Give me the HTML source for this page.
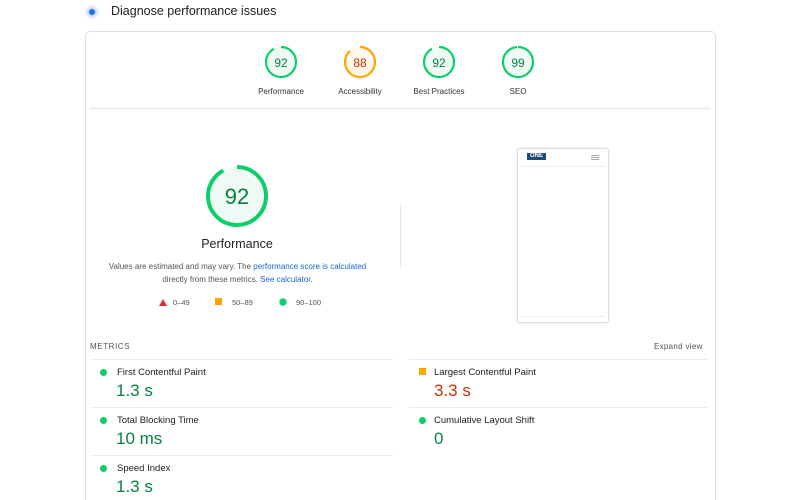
<!DOCTYPE html>
<html><head><style>
*{margin:0;padding:0;box-sizing:border-box}
html,body{width:800px;height:500px;overflow:hidden}
body{background:#fff;font-family:"Liberation Sans",Arial,sans-serif;position:relative;color:#212121}
.a{position:absolute}
.lbl{position:absolute;font-size:8px;color:#333;text-align:center;width:100px}
.mt{position:absolute;font-size:9.5px;color:#212121}
.mv{position:absolute;font-size:17px;line-height:20px;color:#0b8043}
.dot{position:absolute;width:7px;height:7px;border-radius:50%;background:#0cce6b}
.hl{position:absolute;height:1px;background:#ebebeb}
</style></head><body>
<div class="a" style="left:84px;top:4px;width:16px;height:16px;border-radius:50%;background:radial-gradient(circle,#1a73e8 0 2.5px,#cfe2fc 3.5px,#e8f0fe 6px,rgba(255,255,255,0) 8px)"></div>
<div class="a" style="left:111px;top:4px;font-size:12.5px;color:#202124">Diagnose performance issues</div>
<div class="a" style="left:85px;top:31px;width:631px;height:469px;border:1px solid #dedede;border-bottom:none;border-radius:5px 5px 0 0"></div>

<svg class="a" style="left:0;top:0" width="800" height="500">
 <g fill="none" stroke-width="2.2">
  <circle cx="281" cy="62" r="15" fill="#eefaf3" stroke="#0cce6b" stroke-dasharray="86.7 94.2" transform="rotate(-90 281 62)"/>
  <circle cx="360" cy="62" r="15" fill="#fff6ec" stroke="#ffa400" stroke-dasharray="83 94.2" transform="rotate(-90 360 62)"/>
  <circle cx="439" cy="62" r="15" fill="#eefaf3" stroke="#0cce6b" stroke-dasharray="86.7 94.2" transform="rotate(-90 439 62)"/>
  <circle cx="518" cy="62" r="15" fill="#eefaf3" stroke="#0cce6b" stroke-dasharray="93 94.2" transform="rotate(-90 518 62)"/>
  <circle cx="237" cy="196" r="29" fill="#eefaf3" stroke="#0cce6b" stroke-width="4" stroke-dasharray="167.6 182.2" transform="rotate(-90 237 196)"/>
 </g>
 <g font-family="Liberation Sans, Arial, sans-serif" text-anchor="middle">
  <text x="281" y="67" font-size="12" fill="#0b8043">92</text>
  <text x="360" y="67" font-size="12" fill="#c33300">88</text>
  <text x="439" y="67" font-size="12" fill="#0b8043">92</text>
  <text x="518" y="67" font-size="12" fill="#0b8043">99</text>
  <text x="237" y="204" font-size="22" fill="#0b8043">92</text>
 </g>
 <polygon points="159,306 163,299 167,306" fill="#e02d2d"/>
 <rect x="215" y="298" width="7" height="7" fill="#ffa400"/>
 <circle cx="283" cy="302" r="3.7" fill="#0cce6b"/>
 <rect x="419" y="368" width="7" height="7" fill="#ffa400"/>
</svg>
<div class="lbl" style="left:231px;top:87px">Performance</div>
<div class="lbl" style="left:310px;top:87px">Accessibility</div>
<div class="lbl" style="left:389px;top:87px">Best Practices</div>
<div class="lbl" style="left:468px;top:87px">SEO</div>
<div class="hl" style="left:90px;top:108px;width:620px;background:#e3e3e3"></div>

<div class="a" style="left:137px;top:237px;width:200px;text-align:center;font-size:12.5px;color:#212121">Performance</div>
<div class="a" style="left:100px;top:260px;width:275px;text-align:center;font-size:8px;line-height:13px;color:#555">Values are estimated and may vary. The <span style="color:#1967d2">performance score is calculated</span><br>directly from these metrics. <span style="color:#1967d2">See calculator.</span></div>
<div class="a" style="left:173px;top:298px;font-size:7.5px;color:#555">0–49</div>
<div class="a" style="left:232px;top:298px;font-size:7.5px;color:#555">50–89</div>
<div class="a" style="left:296px;top:298px;font-size:7.5px;color:#555">90–100</div>
<div class="a" style="left:400px;top:205px;width:1px;height:62px;background:#e3e3e3"></div>

<div class="a" style="left:517px;top:148px;width:92px;height:175px;border:1px solid #ddd;border-radius:3px;box-shadow:0 0 2px rgba(0,0,0,.1)"></div>
<div class="a" style="left:527px;top:153px;width:19px;height:7px;background:#1e4d7a;color:#fff;font-size:6px;font-weight:bold;line-height:7px;text-align:center">ONE</div>
<div class="a" style="left:591px;top:155px;width:8px;height:1px;background:#aaa;box-shadow:0 2px 0 #aaa,0 4px 0 #aaa"></div>
<div class="a" style="left:521px;top:166px;width:84px;height:1px;background:#eee"></div>
<div class="a" style="left:521px;top:316px;width:84px;height:1px;background:#eee"></div>

<div class="a" style="left:90px;top:342px;font-size:8px;letter-spacing:.6px;color:#555">METRICS</div>
<div class="a" style="left:654px;top:342px;font-size:8px;letter-spacing:.3px;color:#555">Expand view</div>
<div class="hl" style="left:90px;top:359px;width:303px"></div>
<div class="hl" style="left:409px;top:359px;width:299px"></div>
<div class="hl" style="left:90px;top:407px;width:303px"></div>
<div class="hl" style="left:409px;top:407px;width:299px"></div>
<div class="hl" style="left:90px;top:455px;width:303px"></div>

<div class="dot" style="left:100px;top:369px"></div>
<div class="mt" style="left:117px;top:367px">First Contentful Paint</div>
<div class="mv" style="left:116px;top:381px">1.3 s</div>
<div class="mt" style="left:434px;top:367px">Largest Contentful Paint</div>
<div class="mv" style="left:434px;top:381px;color:#c33300">3.3 s</div>
<div class="dot" style="left:100px;top:417px"></div>
<div class="mt" style="left:117px;top:415px">Total Blocking Time</div>
<div class="mv" style="left:116px;top:429px">10 ms</div>
<div class="dot" style="left:419px;top:417px"></div>
<div class="mt" style="left:434px;top:415px">Cumulative Layout Shift</div>
<div class="mv" style="left:434px;top:429px">0</div>
<div class="dot" style="left:100px;top:465px"></div>
<div class="mt" style="left:117px;top:463px">Speed Index</div>
<div class="mv" style="left:116px;top:477px">1.3 s</div>
</body></html>
